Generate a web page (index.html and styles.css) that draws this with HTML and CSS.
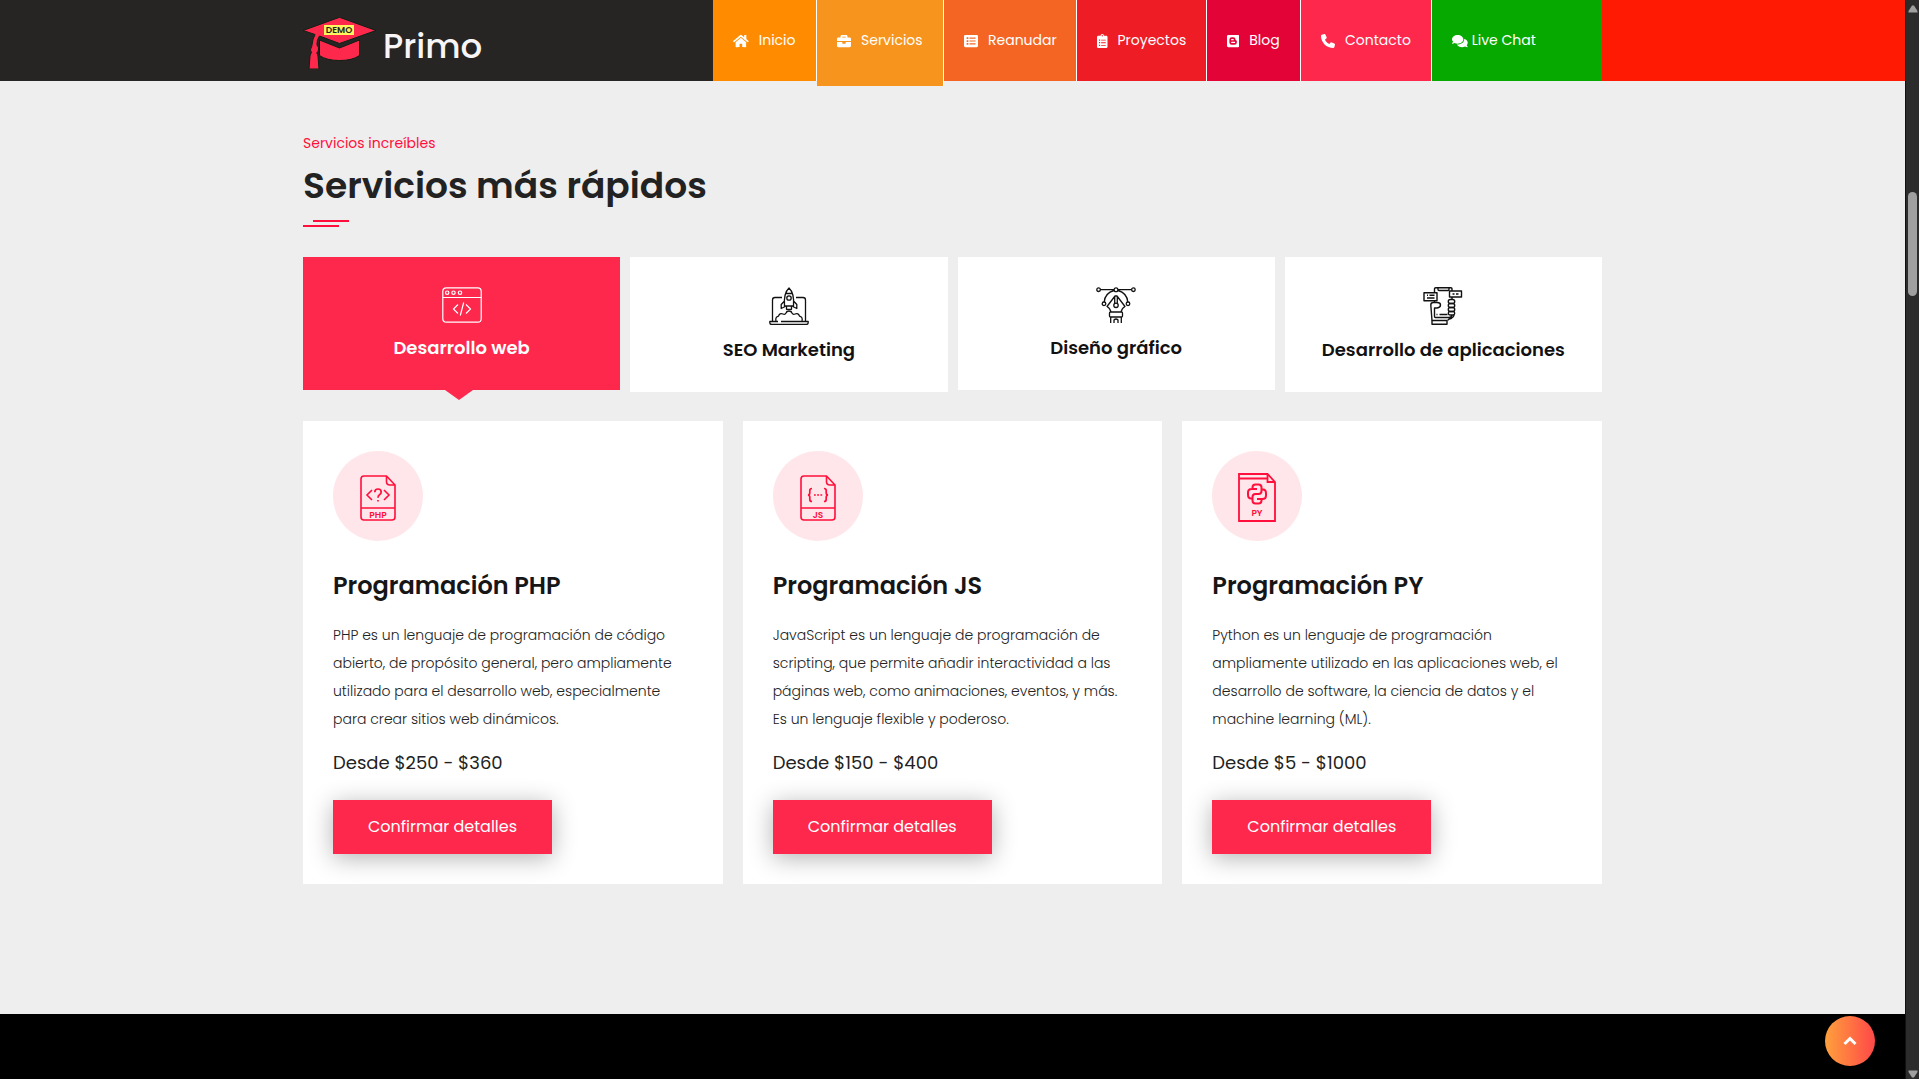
FILE: index.html
```html
<!DOCTYPE html>
<html lang="es">
<head>
    <meta charset="UTF-8">
    <meta name="viewport" content="width=device-width, initial-scale=1.0">
    <title>Primo - Servicios</title>
    <link rel="stylesheet" href="styles.css">
</head>
<body>
    <!-- Header -->
    <header class="header">
        <div class="header-inner">
            <a class="logo" href="#">
                <svg width="73" height="52" viewBox="0 0 73 52" aria-hidden="true">
                    <g fill="#fe284d" stroke="#0d1f14" stroke-width="1">
                        <path d="M16.500 23l20 8 20-8v15.500q-7 5-20 5t-20-5z"/>
                        <path d="M36.500.3L73 13.500 36.500 26.500 16.500 19q-3 4-2.500 9 2 2 1.500 5-.5 2-1.800 3 1 1 1.300 3l1 13H6l1-13q.3-2 1.500-3.300-2.300-2.700.2-6.200 1-8 3.300-12L0 13.500z"/>
                    </g>
                    <path fill="#fff45c" d="M21 8h30v10H21z"/>
                    <text class="logo-tag" x="36" y="16" text-anchor="middle">DEMO</text>
                </svg>
                <span>Primo</span>
            </a>
            <nav class="nav">
                <a class="nav-item home" href="#">
                    <svg viewBox="0 0 576 512"><path d="M280.370 148.260L96 300.110V464a16 16 0 0 0 16 16l112.060-.29a16 16 0 0 0 15.920-16V368a16 16 0 0 1 16-16h64a16 16 0 0 1 16 16v95.640a16 16 0 0 0 16 16.050L464 480a16 16 0 0 0 16-16V300L295.670 148.260a12.190 12.190 0 0 0-15.300 0zM571.600 251.470L488 182.560V44.050a12 12 0 0 0-12-12h-56a12 12 0 0 0-12 12v72.610L318.470 43a48 48 0 0 0-61 0L4.340 251.470a12 12 0 0 0-1.600 16.900l25.500 31A12 12 0 0 0 45.150 301l235.220-193.740a12.190 12.190 0 0 1 15.300 0L530.900 301a12 12 0 0 0 16.900-1.600l25.500-31a12 12 0 0 0-1.700-16.930z"/></svg>
                    Inicio
                </a>
                <a class="nav-item services active" href="#">
                    <svg viewBox="0 0 512 512"><path d="M320 336c0 8.840-7.160 16-16 16h-96c-8.840 0-16-7.160-16-16v-48H0v144c0 25.600 22.400 48 48 48h416c25.600 0 48-22.400 48-48V288H320v48zm144-208h-80V80c0-25.600-22.400-48-48-48H176c-25.600 0-48 22.400-48 48v48H48c-25.600 0-48 22.400-48 48v80h512v-80c0-25.600-22.400-48-48-48zm-144 0H192V96h128v32z"/></svg>
                    Servicios
                </a>
                <a class="nav-item resume" href="#">
                    <svg viewBox="0 0 512 512"><path fill-rule="evenodd" d="M48 32h416a48 48 0 0 1 48 48v352a48 48 0 0 1-48 48H48a48 48 0 0 1-48-48V80a48 48 0 0 1 48-48zM96 120v64h64v-64zM200 130v44h224v-44zM96 224v64h64v-64zM200 234v44h224v-44zM96 328v64h64v-64zM200 338v44h224v-44z"/></svg>
                    Reanudar
                </a>
                <a class="nav-item projects" href="#">
                    <svg viewBox="0 0 384 512"><path fill-rule="evenodd" d="M48 64h80a64 64 0 0 1 128 0h80a48 48 0 0 1 48 48v352a48 48 0 0 1-48 48H48a48 48 0 0 1-48-48V112a48 48 0 0 1 48-48zM192 40a24 24 0 1 0 0 48a24 24 0 1 0 0-48zM72 200v44h44v-44zM152 206v32h168v-32zM72 296v44h44v-44zM152 302v32h168v-32zM72 392v44h44v-44zM152 398v32h168v-32z"/></svg>
                    Proyectos
                </a>
                <a class="nav-item blog" href="#">
                    <svg viewBox="0 0 448 512"><path fill-rule="evenodd" d="M48 32h352a48 48 0 0 1 48 48v352a48 48 0 0 1-48 48H48a48 48 0 0 1-48-48V80a48 48 0 0 1 48-48zM172 116a84 84 0 0 0-84 84v112a84 84 0 0 0 84 84h104a84 84 0 0 0 84-84v-50q0-30-32-30-16 0-16-18v-14a84 84 0 0 0-84-84zM170 184h56a24 24 0 0 1 0 48h-56a24 24 0 0 1 0-48zM170 280h108a24 24 0 0 1 0 48H170a24 24 0 0 1 0-48z"/></svg>
                    Blog
                </a>
                <a class="nav-item contact" href="#">
                    <svg viewBox="0 0 512 512"><path d="M164.900 24.600c-7.700-18.600-28-28.500-47.400-23.200l-88 24C12.100 30.200 0 46 0 64C0 311.400 200.600 512 448 512c18 0 33.800-12.100 38.600-29.500l24-88c5.300-19.400-4.600-39.700-23.200-47.400l-96-40c-16.300-6.800-35.200-2.100-46.300 11.600L304.700 368C234.300 334.700 177.300 277.700 144 207.300L193.300 167c13.700-11.200 18.400-30 11.600-46.300l-40-96z"/></svg>
                    Contacto
                </a>
                <a class="nav-item chat" href="#">
                    <svg viewBox="0 0 576 512"><path d="M416 192c0-88.400-93.100-160-208-160S0 103.600 0 192c0 34.300 14.100 65.900 38 92-13.400 30.200-35.500 54.200-35.800 54.500-2.200 2.300-2.800 5.700-1.500 8.700S4.800 352 8 352c36.600 0 66.900-12.300 88.700-25 32.200 15.700 70.300 25 111.300 25 114.900 0 208-71.600 208-160zm122 220c23.900-26 38-57.700 38-92 0-66.900-53.500-124.200-129.300-148.100.9 6.600 1.300 13.300 1.300 20.100 0 105.900-107.700 192-240 192-10.800 0-21.300-.8-31.700-1.900C207.800 439.600 281.800 480 368 480c41 0 79.100-9.200 111.300-25 21.800 12.700 52.100 25 88.700 25 3.200 0 6.100-1.900 7.300-4.800 1.300-2.900.7-6.300-1.500-8.700-.3-.2-22.400-24.200-35.800-54.500z"/></svg>
                    Live Chat
                </a>
            </nav>
        </div>
    </header>

    <!-- Services -->
    <main class="services-section">
        <div class="container">
            <p class="subtitle">Servicios increíbles</p>
            <h1>Servicios más rápidos</h1>
            <div class="title-lines"><span></span><span></span></div>

            <div class="tabs">
                <button class="tab active" type="button">
                    <svg width="40" height="36" viewBox="0 0 40 36" fill="none" stroke="currentColor" stroke-width="1.200">
                        <rect x=".8" y=".8" width="38.400" height="34.400" rx="3.500"/>
                        <path d="M.8 10.500h38.400M16 17.500l-4.500 4.500 4.500 4.500M24 17.500l4.500 4.500-4.500 4.500M21.700 15.500l-3.400 13"/>
                        <circle cx="5.200" cy="5.700" r="1.700"/><circle cx="11.500" cy="5.700" r="1.700"/><circle cx="18" cy="5.700" r="1.700"/>
                    </svg>
                    <span>Desarrollo web</span>
                </button>
                <button class="tab" type="button">
                    <svg width="40" height="38" viewBox="0 0 40 38" fill="none" stroke="currentColor" stroke-width="1.300" stroke-linejoin="round">
                        <path d="M13 10.500H6q-2.500 0-2.500 2.500v21.500M27 10.500h7q2.500 0 2.500 2.500v21.500"/>
                        <path d="M9 34.500H.8v1q0 2 2 2h34.400q2 0 2-2v-1H12"/>
                        <path d="M15.500 19Q14.500 6 20 1q5.500 5 4.500 18zM17 6.500h6M15.500 14l-3.300 3.500v4l4-2M24.500 14l3.300 3.500v4l-4-2M17.500 19v3.300h5V19"/>
                        <circle cx="20" cy="11" r="2.200"/>
                        <path d="M7 34q-1-4 2.500-4.800 1-3.700 4.500-2.200 2 1 3-1 .5-2 3-2t3 2q1 2 3 1 3.500-1.500 4.500 2.200Q34 30 33 34"/>
                    </svg>
                    <span>SEO Marketing</span>
                </button>
                <button class="tab" type="button">
                    <svg width="40" height="36" viewBox="0 0 40 36" fill="none" stroke="currentColor" stroke-width="1.300" stroke-linejoin="round">
                        <path d="M4.500 2.700H18M22 2.700h13.500M18 3.500Q9 6 8.200 15M22 3.500Q31 6 31.800 15"/>
                        <circle cx="2.600" cy="2.700" r="1.800"/><circle cx="20" cy="2.700" r="1.900"/><circle cx="37.400" cy="2.700" r="1.800"/>
                        <circle cx="8" cy="16.800" r="1.800"/><circle cx="32" cy="16.800" r="1.800"/>
                        <path d="M15 25q-1-4-4-5.500L19 9h2l8 10.500q-3 1.500-4 5.500M18.700 9v7.500M21.300 9v7.500"/>
                        <circle cx="20" cy="18.300" r="2.200"/>
                        <rect x="13.500" y="25" width="13" height="5" rx="1"/>
                        <path d="M14.700 30v6M25.300 30v6M18 36v-3q2-2 4 0v3"/>
                    </svg>
                    <span>Diseño gráfico</span>
                </button>
                <button class="tab" type="button">
                    <svg width="40" height="38" viewBox="0 0 40 38" fill="none" stroke="currentColor" stroke-width="1.400" stroke-linejoin="round">
                        <path d="M11.500 5V2q0-1.300 1.300-1.300h15Q29 .7 29 2v2M29 10v2M11.500 14v1.500M15 1v1.500q0 1 1 1h9q1 0 1-1V1"/>
                        <rect x="1" y="5.700" width="13" height="8"/><path d="M4 8.300h1M6.500 8.300h5M4 11h7.500"/>
                        <rect x="26.500" y="4" width="12" height="6"/><path d="M29.500 7h2M33 7h2.500"/>
                        <rect x="25.300" y="12.500" width="6.400" height="4" rx="2"/><rect x="25.300" y="16.500" width="6.400" height="4" rx="2"/><rect x="25.300" y="20.500" width="6.400" height="4" rx="2"/><rect x="25.300" y="24.500" width="6.400" height="3.500" rx="1.700"/>
                        <path d="M9 33.500L7.800 18q0-2.500 2.500-2.500H14q3.500 0 3.500 2.500T14 21h-2.500v8.500q0 1 1 1H26q2.500 0 3-2.500M31 28q0 2-3 3.500-3 .5-3 2M13.500 27.500h1M16.500 27.500h8"/>
                        <rect x="9" y="33.500" width="15" height="3.800"/>
                    </svg>
                    <span>Desarrollo de aplicaciones</span>
                </button>
            </div>

            <div class="cards">
                <article class="card">
                    <div class="card-icon">
                        <svg width="36" height="46" viewBox="0 0 36 46" fill="none" stroke="currentColor" stroke-width="1.600">
                            <path d="M26.500 1H4Q1 1 1 4v38q0 3 3 3h28q3 0 3-3V10zM26.500 1v5.500q0 3.500 3.500 3.500h5M1 33h34M12 15l-5 5 5 5M24 15l5 5-5 5"/>
                            <path stroke-width="1.700" d="M14.800 17.200q0-3.200 3.200-3.200t3.200 3q0 1.700-1.700 2.700-1.500 1-1.500 3M18 25v1.500"/>
                            <text class="file-text" x="18" y="43" text-anchor="middle">PHP</text>
                        </svg>
                    </div>
                    <h2>Programación PHP</h2>
                    <p>PHP es un lenguaje de programación de código abierto, de propósito general, pero ampliamente utilizado para el desarrollo web, especialmente para crear sitios web dinámicos.</p>
                    <div class="price">Desde $250 - $360</div>
                    <button class="btn" type="button">Confirmar detalles</button>
                </article>
                <article class="card">
                    <div class="card-icon">
                        <svg width="36" height="46" viewBox="0 0 36 46" fill="none" stroke="currentColor" stroke-width="1.600">
                            <path d="M26.500 1H4Q1 1 1 4v38q0 3 3 3h28q3 0 3-3V10zM26.500 1v5.500q0 3.500 3.500 3.500h5M1 33h34"/>
                            <path stroke-width="1.700" d="M12 13.500q-2.200 0-2.200 2v2.300q0 2-1.800 2.200 1.800.2 1.800 2.200v2.300q0 2 2.200 2M24 13.500q2.200 0 2.200 2v2.300q0 2 1.800 2.200-1.800.2-1.800 2.200v2.300q0 2-2.200 2M14 20h1.800M17.200 20H19M20.400 20h1.800"/>
                            <text class="file-text" x="18" y="43" text-anchor="middle">JS</text>
                        </svg>
                    </div>
                    <h2>Programación JS</h2>
                    <p>JavaScript es un lenguaje de programación de scripting, que permite añadir interactividad a las páginas web, como animaciones, eventos, y más. Es un lenguaje flexible y poderoso.</p>
                    <div class="price">Desde $150 - $400</div>
                    <button class="btn" type="button">Confirmar detalles</button>
                </article>
                <article class="card">
                    <div class="card-icon">
                        <svg width="38" height="49" viewBox="0 0 38 49" fill="none" stroke="currentColor" stroke-width="1.800">
                            <path d="M29.500 1H1v47h36V9zM29.500 1v8H37M1 5.500h28"/>
                            <path stroke-width="2" d="M14.500 16v-1.500q0-3 3-3h3q3 0 3 3V18q0 3-3 3h-3q-3 0-3 3v3.500q0 3 3 3h3q3 0 3-3V26M19 16h-5.500q-3.500 0-3.500 3.500v2Q10 25.500 13 25.500h1.500M19 26h5.500q3.500 0 3.500-3.500v-2q0-4-3-4h-1.500"/>
                            <text class="file-text" x="19" y="43" text-anchor="middle">PY</text>
                        </svg>
                    </div>
                    <h2>Programación PY</h2>
                    <p>Python es un lenguaje de programación ampliamente utilizado en las aplicaciones web, el desarrollo de software, la ciencia de datos y el machine learning (ML).</p>
                    <div class="price">Desde $5 - $1000</div>
                    <button class="btn" type="button">Confirmar detalles</button>
                </article>
            </div>
        </div>
    </main>

    <footer class="footer"></footer>

    <button class="to-top" type="button" aria-label="Subir">
        <svg width="14" height="10" viewBox="0 0 14 10" fill="none" stroke="#fff" stroke-width="3"><path d="M1.500 8L7 2.500 12.500 8"/></svg>
    </button>

    <div class="scrollbar" aria-hidden="true">
        <svg width="10" height="8" viewBox="0 0 10 8"><path d="M4 .5h2L9.500 6v1.500H.5V6z"/></svg>
        <div class="scroll-thumb"></div>
        <svg width="10" height="8" viewBox="0 0 10 8"><path d="M4 7.500h2L9.500 2V.5H.5V2z"/></svg>
    </div>
</body>
</html>
```
FILE: styles.css
```css
* {
    box-sizing: border-box;
}
body {
    margin: 0;
    padding-right: 14px;
    min-height: 100vh;
    display: flex;
    flex-direction: column;
    font-family: Poppins, Inter, sans-serif;
    color: #222;
    background: #eee;
}
h1, h2, p {
    margin: 0;
}
button {
    border: none;
    font-family: inherit;
    cursor: pointer;
}

/* Header */
.header {
    height: 81px;
    background: linear-gradient(90deg, #272524 50%, #ff1a03 50%);
}
.header-inner {
    max-width: 1299px;
    height: 100%;
    margin: auto;
    display: flex;
    justify-content: space-between;
    align-items: flex-start;
    background: #272524;
}
.logo {
    display: flex;
    align-items: flex-end;
    gap: 7px;
    padding-top: 17px;
    font-size: 34px;
    line-height: 46px;
    font-weight: 500;
    color: #f8f5f7;
    text-decoration: none;
}
.logo-tag {
    font-size: 9px;
    font-weight: 600;
    fill: #222;
}
.nav {
    display: grid;
    grid-template-columns: 104px 127px 133px 130px 94px 131px 170px;
}
.nav-item {
    height: 81px;
    display: flex;
    align-items: center;
    gap: 10px;
    padding-left: 20px;
    border-right: 1px solid #fff;
    font-size: 14px;
    color: #fff;
    text-decoration: none;
}
.nav-item svg {
    height: 14px;
    fill: #fff;
}
.nav-item.active {
    height: 86px;
    padding-bottom: 5px;
}
.home {
    background: #ff8c00;
}
.services {
    background: #f7941d;
}
.resume {
    background: #f46523;
}
.projects {
    background: #ee1c25;
}
.blog {
    background: #e30337;
}
.contact {
    background: #fe284d;
}
.chat {
    gap: 4px;
    border-right: none;
    background: #05a900;
}

/* Services */
.services-section {
    padding: 51px 0 130px;
}
.container {
    max-width: 1299px;
    margin: auto;
}
.subtitle {
    font-size: 14px;
    line-height: 22px;
    color: #ff0f3b;
}
h1 {
    margin-top: 9px;
    font-size: 36px;
    line-height: 46px;
    font-weight: 600;
}
.title-lines {
    display: flex;
    flex-direction: column;
    gap: 3px;
    margin: 11px 0 30px;
}
.title-lines span {
    width: 36px;
    height: 2px;
    background: #ff0f3b;
}
.title-lines span:first-child {
    margin-left: 10px;
}
.tabs {
    display: grid;
    grid-template-columns: repeat(4, 1fr);
    align-items: start;
    gap: 10px;
    margin-bottom: 29px;
}
.tab {
    position: relative;
    display: flex;
    flex-direction: column;
    align-items: center;
    gap: 11px;
    padding: 30px 20px 29px;
    font-size: 18px;
    line-height: 27px;
    font-weight: 600;
    color: #111;
    background: #fff;
}
.tab.active {
    color: #fff;
    background: #fe284d;
}
.tab.active::after {
    content: "";
    position: absolute;
    top: 100%;
    left: 142px;
    border: 14px solid transparent;
    border-top: 10px solid #fe284d;
    border-bottom: none;
}
.cards {
    display: grid;
    grid-template-columns: repeat(3, 1fr);
    gap: 20px;
}
.card {
    padding: 30px;
    background: #fff;
}
.card-icon {
    width: 90px;
    height: 90px;
    display: flex;
    align-items: center;
    justify-content: center;
    padding-top: 3px;
    border-radius: 50%;
    color: #ff0f3b;
    background: #ffe6ea;
}
.file-text {
    font-size: 9px;
    font-weight: 600;
    fill: #ff0f3b;
    stroke: none;
}
.card h2 {
    margin-top: 30px;
    font-size: 24px;
    line-height: 30px;
    font-weight: 600;
    color: #161616;
}
.card p {
    margin-top: 20px;
    font-size: 14px;
    line-height: 28px;
    font-weight: 300;
}
.price {
    margin-top: 16px;
    font-size: 18px;
    line-height: 28px;
}
.btn {
    margin-top: 23px;
    padding: 0 35px;
    font-size: 16px;
    line-height: 54px;
    color: #fff;
    background: #fe284d;
    box-shadow: 0 4px 24px rgba(0, 0, 0, 0.3);
}

.footer {
    flex: 1;
    background: #000;
}
.to-top {
    position: fixed;
    right: 44px;
    bottom: 13px;
    width: 50px;
    height: 50px;
    display: flex;
    align-items: center;
    justify-content: center;
    border-radius: 50%;
    background: linear-gradient(90deg, #ffa03c, #ff4848);
}

/* Scrollbar */
.scrollbar {
    position: fixed;
    top: 0;
    right: 0;
    bottom: 0;
    width: 14px;
    display: flex;
    flex-direction: column;
    align-items: center;
    justify-content: space-between;
    padding: 5px 0 1px;
    border-left: 1px solid #111;
    background: #2c2c2c;
}
.scrollbar svg {
    fill: #a0a0a0;
}
.scroll-thumb {
    width: 9px;
    height: 104px;
    margin: 179px 0 auto;
    border-radius: 5px;
    background: #a0a0a0;
}
```
